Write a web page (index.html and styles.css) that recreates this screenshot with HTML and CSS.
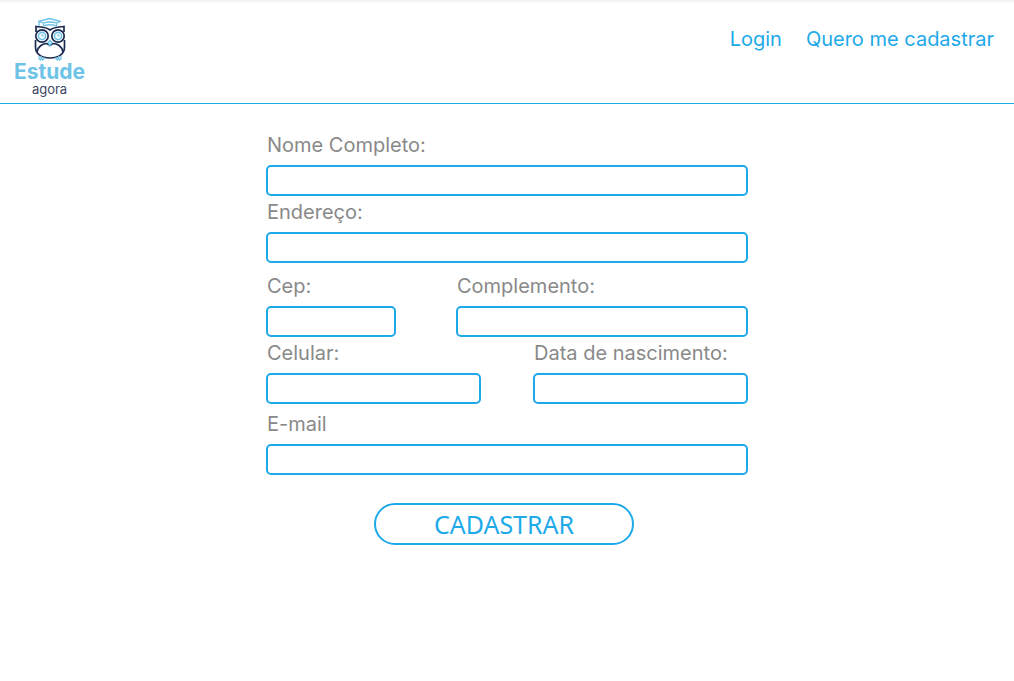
FILE: index.html
```
<!DOCTYPE html>
<html lang="pt-BR">
<head>
<meta charset="utf-8">
<meta name="viewport" content="width=device-width, initial-scale=1">
<title>Estude agora</title>
<link rel="stylesheet" href="styles.css">
</head>
<body>
<header class="header">
  <a class="logo" href="#">
    <svg class="owl" viewBox="0 0 32 44" fill="none" aria-hidden="true">
      <g stroke="#6fc3e6" stroke-width="1.3" stroke-linejoin="round">
        <path d="M4.500 4.500 15.500 1.500l11 3-4 1.500q-7-2-13 0z"/>
        <path d="M9.500 6v3M22.500 6v3M9.500 9q6.500-2.500 13 0M5 4.500v4.500"/>
      </g>
      <path d="M2 15V9.500c4 .5 10 0 14 3.500 4-3.500 10-3 14-3.500V15M1.500 23v7c0 7 6 11 14.500 11s14.500-4 14.500-11v-7" stroke="#1d2b50" stroke-width="1.700"/>
      <path d="M3 35c1-6 6-8.500 10-8.500l3 2 3-2c4 0 9 2.500 10 8.500" stroke="#1d2b50" stroke-width="1.700"/>
      <circle cx="8" cy="19" r="6.200" stroke="#1d2b50" stroke-width="1.700"/>
      <circle cx="24" cy="19" r="6.200" stroke="#1d2b50" stroke-width="1.700"/>
      <circle cx="8" cy="19" r="3.600" stroke="#6fc3e6" stroke-width="1.600"/>
      <circle cx="24" cy="19" r="3.600" stroke="#6fc3e6" stroke-width="1.600"/>
      <path d="M8 17v2h2M24 17v2h2" stroke="#6fc3e6"/>
      <path d="m16 23.500 1.800 2-1.800 3-1.800-3z" stroke="#6fc3e6" stroke-width="1.500"/>
      <path d="M5 39v3l1.500 1 1-3 1 3L10 42v-2M22 40v2l1.500 1 1-3 1 3 1.500-1v-3" stroke="#6fc3e6" stroke-width="1.200"/>
    </svg>
    <span class="logo-name">Estude</span>
    <span class="logo-sub">agora</span>
  </a>
  <nav class="nav">
    <a href="#">Login</a>
    <a href="#">Quero me cadastrar</a>
  </nav>
</header>
<main class="main">
  <form class="form">
    <div class="group">
      <div class="field"><label for="nome">Nome Completo:</label><input id="nome" type="text"></div>
      <div class="field"><label for="endereco">Endereço:</label><input id="endereco" type="text"></div>
    </div>
    <div class="group">
      <div class="row row-cep">
        <div class="field"><label for="cep">Cep:</label><input id="cep" type="text"></div>
        <div class="field"><label for="complemento">Complemento:</label><input id="complemento" type="text"></div>
      </div>
      <div class="row row-half">
        <div class="field"><label for="celular">Celular:</label><input id="celular" type="tel"></div>
        <div class="field"><label for="nascimento">Data de nascimento:</label><input id="nascimento" type="text"></div>
      </div>
    </div>
    <div class="group">
      <div class="field"><label for="email">E-mail</label><input id="email" type="email"></div>
    </div>
    <button class="submit" type="submit">CADASTRAR</button>
  </form>
</main>
</body>
</html>
```
FILE: styles.css
```
* {
  box-sizing: border-box;
}

body {
  margin: 0;
  background: #fff;
  color: #898989;
  font-family: Inter, "Liberation Sans", sans-serif;
  font-size: 20px;
  line-height: 24px;
}

.header {
  display: flex;
  justify-content: space-between;
  align-items: flex-start;
  min-height: 104px;
  padding: 15px 20px 6px 14px;
  border-top: 2px solid #f4f4f4;
  border-bottom: 1px solid #1ea9e8;
}

.logo {
  display: flex;
  flex-direction: column;
  align-items: center;
  text-decoration: none;
}

.owl {
  width: 32px;
  height: 44px;
}

.logo-name {
  color: #6fc3e6;
  font-size: 21px;
  font-weight: 700;
  line-height: 22px;
}

.logo-sub {
  color: #3c4665;
  font-size: 13px;
  line-height: 12px;
}

.nav {
  display: flex;
  gap: 24px;
  padding-top: 10px;
}

.nav a {
  color: #1ea9e8;
  text-decoration: none;
}

.main {
  padding: 29px 16px;
}

.form {
  display: flex;
  flex-direction: column;
  gap: 8px;
  max-width: 482px;
  margin: 0 auto;
}

.group {
  display: flex;
  flex-direction: column;
  gap: 4px;
}

.group:nth-child(2) {
  margin-top: 3px;
}

.row {
  display: grid;
}

.row-cep {
  grid-template-columns: 130px 1fr;
  gap: 60px;
}

.row-half {
  grid-template-columns: 1fr 1fr;
  gap: 52px;
}

.field {
  display: flex;
  flex-direction: column;
  gap: 8px;
  min-width: 0;
}

.field label {
  padding-left: 1px;
  white-space: nowrap;
}

.field input {
  width: 100%;
  height: 31px;
  padding: 0 8px;
  border: 2px solid #1ea9e8;
  border-radius: 5px;
  background: #fff;
  color: inherit;
  font: inherit;
}

.submit {
  width: 260px;
  height: 42px;
  margin: 20px 0 0 108px;
  padding: 0;
  border: 2px solid #1ea9e8;
  border-radius: 21px;
  background: #fff;
  color: #1ea9e8;
  font-family: "Noto Sans", "Open Sans", sans-serif;
  font-size: 25px;
  line-height: 36px;
}
```
